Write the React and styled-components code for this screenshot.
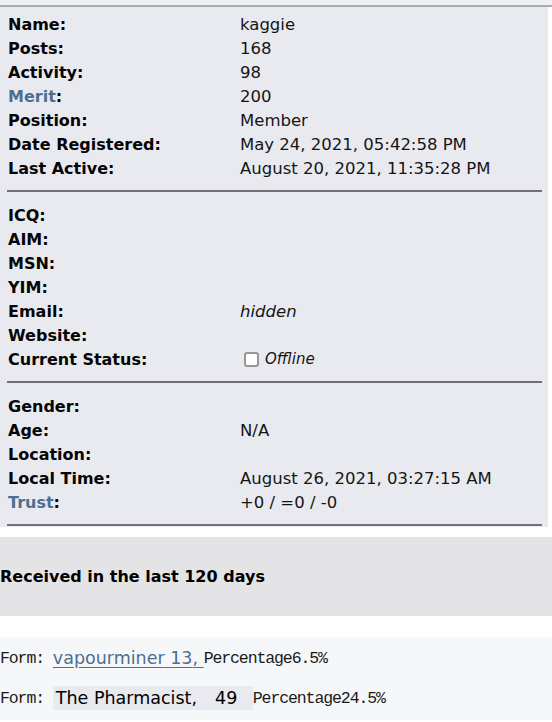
import React from 'react';
import styled, { createGlobalStyle } from 'styled-components';

const profile = [
	[
		['Name', 'kaggie'],
		['Posts', '168'],
		['Activity', '98'],
		['Merit', '200', true],
		['Position', 'Member'],
		['Date Registered', 'May 24, 2021, 05:42:58 PM'],
		['Last Active', 'August 20, 2021, 11:35:28 PM'],
	],
	[
		['ICQ', ''],
		['AIM', ''],
		['MSN', ''],
		['YIM', ''],
		['Email', 'hidden', false, 'italic'],
		['Website', ''],
		['Current Status', 'Offline', false, 'status'],
	],
	[
		['Gender', ''],
		['Age', 'N/A'],
		['Location', ''],
		['Local Time', 'August 26, 2021, 03:27:15 AM'],
		['Trust', '+0 / =0 / -0', true],
	],
];

const senders = [
	{ name: 'vapourminer', count: 13, pct: '6.5%', link: true },
	{ name: 'The Pharmacist', count: 49, pct: '24.5%', link: false },
];

function App() {
	return (
		<>
			<GlobalStyle />
			<Page>
				<Frame>
					<Panel>
						{profile.map((section, i) => (
							<React.Fragment key={i}>
								<Section first={i === 0}>
									{section.map(([label, value, linked, kind]) => (
										<Row key={label}>
											<Label>
												{linked ? <LabelLink>{label}</LabelLink> : label}:
											</Label>
											<Value italic={kind === 'italic'}>
												{kind === 'status' ? (
													<>
														<StatusBox />
														<StatusText>{value}</StatusText>
													</>
												) : value}
											</Value>
										</Row>
									))}
								</Section>
								<Divider />
							</React.Fragment>
						))}
					</Panel>
				</Frame>

				<Heading>Received in the last 120 days</Heading>

				<SenderList>
					{senders.map((s) => (
						<SenderRow key={s.name}>
							<Mono>Form: </Mono>
							{s.link ? (
								<SenderLink>{s.name} {s.count}, </SenderLink>
							) : (
								<Highlight>
									{s.name},<Count>{s.count}</Count>
								</Highlight>
							)}
							<Mono>Percentage{s.pct}</Mono>
						</SenderRow>
					))}
				</SenderList>
			</Page>
		</>
	);
}

// ======== styles ==========
const GlobalStyle = createGlobalStyle`
	body {
		margin: 0;
		background: #ffffff;
		font-family: "DejaVu Sans", Verdana, sans-serif;
		color: #000;
	}
`

const Page = styled.div`
	width: 552px;
	padding-top: 5px;
	background: linear-gradient(#eef0f3 0, #eef0f3 5px, #fff 5px);
`

const Frame = styled.div`
	border-top: 2px solid #a9abb5;
	background: #fff;
`

const Panel = styled.div`
	width: 548px;
	background: #e9eaf0;
	padding-bottom: 1px;
`

const Section = styled.div`
	padding-top: ${props => (props.first ? '5px' : '11px')};
	padding-bottom: 10px;
`

const Row = styled.div`
	display: grid;
	grid-template-columns: 240px 1fr;
	height: 24px;
	align-items: center;
	font-size: 16px;
`

const Label = styled.div`
	padding-left: 8px;
	font-weight: bold;
	white-space: nowrap;
	color: #050505;
`

const LabelLink = styled.span`
	color: #4d6f91;
`

const Value = styled.div`
	display: flex;
	align-items: center;
	white-space: nowrap;
	font-size: 16.5px;
	color: #151515;
	font-style: ${props => (props.italic ? 'italic' : 'normal')};
`

const StatusBox = styled.span`
	box-sizing: border-box;
	width: 15px;
	height: 15px;
	margin-left: 4px;
	margin-right: 6px;
	border: 2.5px solid #979797;
	border-radius: 3px;
	background: #fff;
`

const StatusText = styled.span`
	font-style: italic;
	font-size: 15px;
`

const Divider = styled.hr`
	margin: 0 6px 0 7px;
	border: 0;
	height: 2px;
	background: #6f6f75;
`

const Heading = styled.h3`
	margin: 10px 0 0;
	height: 79px;
	display: flex;
	align-items: center;
	background: #e4e4e6;
	font-size: 16px;
	font-weight: bold;
`

const SenderList = styled.div`
	margin-top: 21px;
	padding: 1px 0 2px;
	background: #f6f7f9;
`

const SenderRow = styled.div`
	display: flex;
	align-items: center;
	height: 40px;
	white-space: pre;
`

const Mono = styled.span`
	font-family: "Liberation Mono", "Courier New", monospace;
	font-size: 16.5px;
	letter-spacing: -1.1px;
	color: #1a1a1a;
`

const SenderLink = styled.a`
	font-size: 17.5px;
	color: #4d6f91;
	text-decoration: underline;
	text-underline-offset: 3px;
`

const Highlight = styled.span`
	display: flex;
	align-items: center;
	height: 24px;
	width: 200px;
	padding-left: 3px;
	box-sizing: border-box;
	background: #e9eaf0;
	font-size: 17.5px;
`

const Count = styled.span`
	margin-left: 18px;
`

export default App;
